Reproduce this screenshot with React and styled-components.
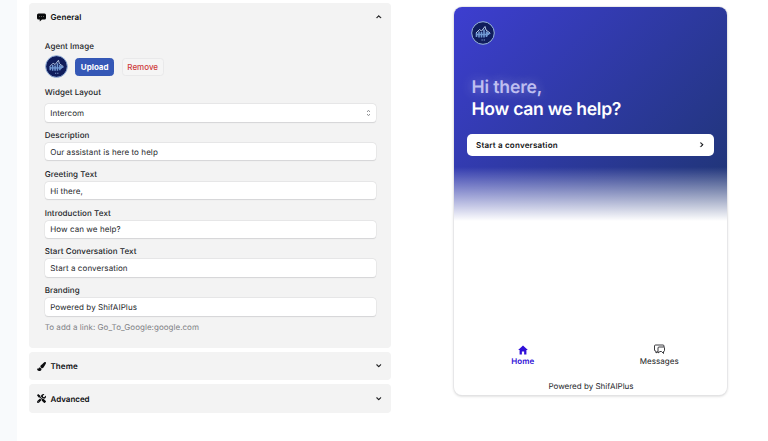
import React from 'react'
import styled, { createGlobalStyle } from 'styled-components'
import { FaChevronDown, FaChevronUp, FaChevronRight, FaPaintBrush, FaTools } from 'react-icons/fa'
import { IoMdHome } from 'react-icons/io'

const GlobalStyle = createGlobalStyle`
  * {
    box-sizing: border-box;
  }
  body {
    margin: 0;
    background: #fff;
    overflow: hidden;
    font-family: Inter, "Liberation Sans", sans-serif;
    font-size: 8px;
    color: #25272b;
    text-rendering: geometricPrecision;
  }
`;

const Page = styled.div`
  display: flex;
  width: 768px;
  height: 441px;
`;

const Rail = styled.div`
  width: 17px;
  background: #f8fafc;
`;

const Settings = styled.div`
  width: 361.6px;
  margin: 2.8px 0 0 12.4px;
  display: flex;
  flex-direction: column;
  gap: 4px;
`;

const Panel = styled.section`
  height: ${props => props.$height};
  background: #f3f3f3;
  border-radius: 4px;
`;

const PanelHeader = styled.div`
  height: 28.5px;
  padding: 0 9px 0 8px;
  display: flex;
  align-items: center;
  color: #0c0d0f;
`;

const PanelTitle = styled.span`
  flex: 1;
  margin-left: 4.1px;
  font-size: 8px;
  font-weight: 600;
  letter-spacing: ${props => props.$spacing || "0.1px"};
`;

const PanelBody = styled.div`
  padding: 8.5px 15.3px 0;
`;

const Label = styled.div`
  height: 12px;
  line-height: 12px;
  font-weight: 500;
  color: #222428;
  letter-spacing: 0.08px;
`;

const AgentRow = styled.div`
  display: flex;
  align-items: center;
  height: 24px;
  margin: 3px 0 7.5px;
`;

const Button = styled.button`
  height: 17.5px;
  width: ${props => props.$width};
  padding: 0;
  margin-left: 7.5px;
  border-radius: 3.5px;
  border: 1px solid ${props => props.$primary ? "#3457b4" : "#e9e9ea"};
  background: ${props => props.$primary ? "#3558b7" : "#f5f5f5"};
  color: ${props => props.$primary ? "#fff" : "#cf3a3a"};
  font-family: inherit;
  font-size: 8px;
  font-weight: ${props => props.$primary ? 700 : 500};
`;

const Field = styled.div`
  margin-bottom: 7.5px;
`;

const Input = styled.div`
  display: flex;
  align-items: center;
  justify-content: space-between;
  height: 17.3px;
  margin-top: ${props => props.$top || "2px"};
  padding: 0 5px 0 5.5px;
  background: #fff;
  border-radius: 3.5px;
  box-shadow: 0 0 0 0.4px #dcdcdd, 0 0.8px 1px #cfcfd1;
  letter-spacing: 0.08px;
`;

const Hint = styled.div`
  line-height: 12px;
  margin-top: -1.7px;
  color: #808185;
  letter-spacing: 0.03px;
`;

const Widget = styled.div`
  width: 273px;
  height: 388px;
  margin: 6.5px 0 0 63.5px;
  border-radius: 8px;
  overflow: hidden;
  display: flex;
  flex-direction: column;
  background: #fff;
  box-shadow: 0 0 0 0.7px #e6e6e8, 0 1px 3px rgba(0, 0, 0, 0.22);
`;

const Hero = styled.div`
  height: 215px;
  padding: 14.5px 13.5px 0 13px;
  background:
    linear-gradient(to bottom, rgba(255, 255, 255, 0) 160px, #fff 214px),
    linear-gradient(135deg, #3d3ed0 0%, #203578 92%);
`;

const HeroTop = styled.div`
  height: 56px;
  padding-left: 3.5px;
`;

const Greeting = styled.div`
  padding-left: 4px;
  font-size: 17.6px;
  line-height: 21.5px;
  font-weight: 600;
  white-space: nowrap;
  letter-spacing: ${props => props.$spacing};
  color: ${props => props.$soft ? "#bfbff0" : "#fff"};
  text-shadow: ${props => props.$soft ? "0 0 12px rgba(255, 255, 255, 0.35)" : "none"};
`;

const StartButton = styled.div`
  display: flex;
  align-items: center;
  justify-content: space-between;
  height: 22px;
  margin-top: 14px;
  padding: 0 9.5px 0 8.5px;
  border-radius: 5px;
  background: #fff;
  color: #111216;
  font-weight: 600;
  letter-spacing: 0.2px;
`;

const Tabs = styled.div`
  display: flex;
  height: 35px;
  margin-top: auto;
`;

const Tab = styled.div`
  flex: 1;
  display: flex;
  flex-direction: column;
  align-items: center;
  color: ${props => props.$active ? "#3010d8" : "#222326"};
  font-weight: ${props => props.$active ? 600 : 400};
  letter-spacing: 0.05px;
`;

const TabIcon = styled.div`
  display: flex;
  align-items: center;
  height: 12.5px;
`;

const Powered = styled.div`
  height: 14px;
  margin-bottom: 2px;
  line-height: 14px;
  text-align: center;
`;

const AgentAvatar = ({ size }) => (
  <svg width={size} height={size} viewBox="0 0 24 24">
    <circle cx="12" cy="12" r="11.3" fill="#101d5c" stroke="#98b5dc" strokeWidth="1" />
    <path d="M5.5 12V16M8 10.5V16.5M10.5 11V16.5M13 8.5V16.5M15.5 10.5V16" stroke="#7199d4" strokeWidth="1.6" />
    <path d="M5 12L8.5 8.5L10.5 10L14 5.5L15 9L19 12L16.5 14" fill="none" stroke="#c8dcf5" strokeWidth="0.9" />
    <path d="M5 13.5H17" stroke="#7199d4" strokeWidth="1.4" />
    <path d="M16 11L20 12.5L16 14.5Z" fill="#7199d4" />
    <path d="M10.5 19H11.7M12.7 19H14" stroke="#7e9acb" strokeWidth="1.2" />
  </svg>
)

const MessageIcon = () => (
  <svg width="9" height="9" viewBox="0 0 18 18">
    <path d="M3 1H15Q18 1 18 4V10Q18 13 15 13H10L5.5 17V13H3Q0 13 0 10V4Q0 1 3 1Z" fill="#08090a" />
    <path d="M4 7H6M8 7H10M12 7H14" stroke="#777" strokeWidth="1.5" />
  </svg>
)

const SelectArrows = () => (
  <svg width="5" height="8" viewBox="0 0 5 8" fill="none" stroke="#77787c" strokeWidth="0.9">
    <path d="M1 2.8L2.5 1.5L4 2.8M1 5.2L2.5 6.5L4 5.2" />
  </svg>
)

const ChatsIcon = () => (
  <svg width="11" height="11" viewBox="0 0 22 22" fill="none" stroke="#26272a" strokeWidth="1.8" strokeLinejoin="round">
    <path d="M20 6V4Q20 2 18 2H3Q1 2 1 4V12Q1 14 3 14H4V18L8 15" />
    <path d="M10 6H19Q21 6 21 8V13Q21 15 19 15V19L15 15H12L8 18V8Q8 6 10 6Z" />
  </svg>
)

const Chevron = styled(FaChevronDown)`
  stroke: currentColor;
  stroke-width: 30px;
  overflow: visible;
`;

const fields = [
  { label: "Description", value: "Our assistant is here to help" },
  { label: "Greeting Text", value: "Hi there," },
  { label: "Introduction Text", value: "How can we help?" },
  { label: "Start Conversation Text", value: "Start a conversation" },
  { label: "Branding", value: "Powered by ShifAIPlus" },
]

const App = () => {
  return (
    <Page>
      <GlobalStyle />
      <Rail />
      <Settings>
        <Panel $height="345px">
          <PanelHeader>
            <MessageIcon />
            <PanelTitle>General</PanelTitle>
            <Chevron as={FaChevronUp} size={5.5} />
          </PanelHeader>
          <PanelBody>
            <Label>Agent Image</Label>
            <AgentRow>
              <AgentAvatar size={23} />
              <Button $primary $width="39px">Upload</Button>
              <Button $width="42px">Remove</Button>
            </AgentRow>
            <Field>
              <Label>Widget Layout</Label>
              <Input $top="6px">Intercom<SelectArrows /></Input>
            </Field>
            {fields.map(field => (
              <Field key={field.label}>
                <Label>{field.label}</Label>
                <Input>{field.value}</Input>
              </Field>
            ))}
            <Hint>To add a link: Go_To_Google:google.com</Hint>
          </PanelBody>
        </Panel>
        <Panel $height="28.5px">
          <PanelHeader>
            <FaPaintBrush size={9} />
            <PanelTitle>Theme</PanelTitle>
            <Chevron size={5.5} />
          </PanelHeader>
        </Panel>
        <Panel $height="28.5px">
          <PanelHeader>
            <FaTools size={9} />
            <PanelTitle $spacing="-0.02px">Advanced</PanelTitle>
            <Chevron size={5.5} />
          </PanelHeader>
        </Panel>
      </Settings>
      <Widget>
        <Hero>
          <HeroTop>
            <AgentAvatar size={24} />
          </HeroTop>
          <Greeting $soft $spacing="-0.15px">Hi there,</Greeting>
          <Greeting $spacing="-0.28px">How can we help?</Greeting>
          <StartButton>Start a conversation<Chevron as={FaChevronRight} size={5.5} /></StartButton>
        </Hero>
        <Tabs>
          <Tab $active>
            <TabIcon><IoMdHome size={12} /></TabIcon>
            Home
          </Tab>
          <Tab>
            <TabIcon><ChatsIcon /></TabIcon>
            Messages
          </Tab>
        </Tabs>
        <Powered>Powered by ShifAIPlus</Powered>
      </Widget>
    </Page>
  )
}

export default App
